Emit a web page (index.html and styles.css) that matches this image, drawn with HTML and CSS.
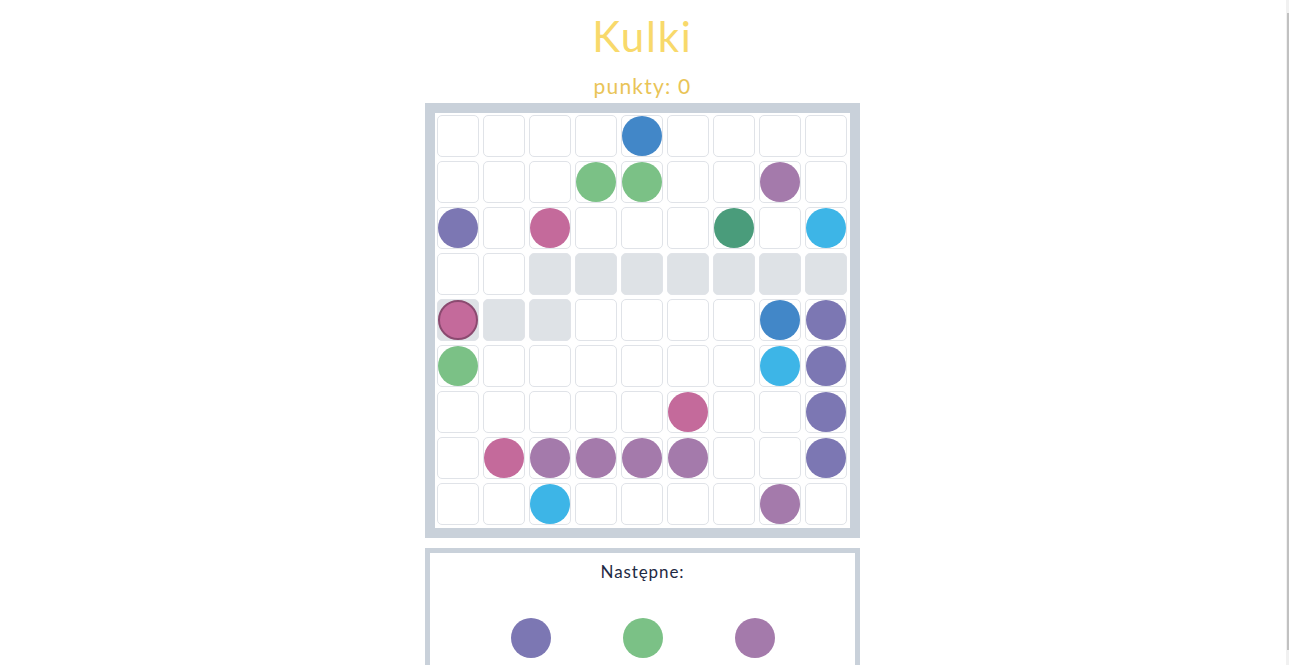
FILE: index.html
```html
<!DOCTYPE html>
<html lang="pl">
<head>
<meta charset="utf-8">
<title>Kulki</title>
<link rel="stylesheet" href="styles.css">
</head>
<body>
<main class="app">
  <h1 class="title">Kulki</h1>
  <div class="score">punkty: 0</div>
  <div class="board">
    <div class="cell"></div><div class="cell"></div><div class="cell"></div><div class="cell"></div><div class="cell"><span class="ball blue"></span></div><div class="cell"></div><div class="cell"></div><div class="cell"></div><div class="cell"></div>
    <div class="cell"></div><div class="cell"></div><div class="cell"></div><div class="cell"><span class="ball green"></span></div><div class="cell"><span class="ball green"></span></div><div class="cell"></div><div class="cell"></div><div class="cell"><span class="ball purple"></span></div><div class="cell"></div>
    <div class="cell"><span class="ball indigo"></span></div><div class="cell"></div><div class="cell"><span class="ball pink"></span></div><div class="cell"></div><div class="cell"></div><div class="cell"></div><div class="cell"><span class="ball teal"></span></div><div class="cell"></div><div class="cell"><span class="ball cyan"></span></div>
    <div class="cell"></div><div class="cell"></div><div class="cell path"></div><div class="cell path"></div><div class="cell path"></div><div class="cell path"></div><div class="cell path"></div><div class="cell path"></div><div class="cell path"></div>
    <div class="cell path"><span class="ball pink selected"></span></div><div class="cell path"></div><div class="cell path"></div><div class="cell"></div><div class="cell"></div><div class="cell"></div><div class="cell"></div><div class="cell"><span class="ball blue"></span></div><div class="cell"><span class="ball indigo"></span></div>
    <div class="cell"><span class="ball green"></span></div><div class="cell"></div><div class="cell"></div><div class="cell"></div><div class="cell"></div><div class="cell"></div><div class="cell"></div><div class="cell"><span class="ball cyan"></span></div><div class="cell"><span class="ball indigo"></span></div>
    <div class="cell"></div><div class="cell"></div><div class="cell"></div><div class="cell"></div><div class="cell"></div><div class="cell"><span class="ball pink"></span></div><div class="cell"></div><div class="cell"></div><div class="cell"><span class="ball indigo"></span></div>
    <div class="cell"></div><div class="cell"><span class="ball pink"></span></div><div class="cell"><span class="ball purple"></span></div><div class="cell"><span class="ball purple"></span></div><div class="cell"><span class="ball purple"></span></div><div class="cell"><span class="ball purple"></span></div><div class="cell"></div><div class="cell"></div><div class="cell"><span class="ball indigo"></span></div>
    <div class="cell"></div><div class="cell"></div><div class="cell"><span class="ball cyan"></span></div><div class="cell"></div><div class="cell"></div><div class="cell"></div><div class="cell"></div><div class="cell"><span class="ball purple"></span></div><div class="cell"></div>
  </div>
  <section class="next">
    <div class="next-label">Następne:</div>
    <div class="next-balls">
      <span class="ball indigo"></span>
      <span class="ball green"></span>
      <span class="ball purple"></span>
    </div>
  </section>
</main>
<div class="scrollbar"><div class="scrollbar-thumb"></div></div>
</body>
</html>
```

FILE: styles.css
```css
html {
  background: #ffffff;
}
body {
  margin: 0;
  padding-right: 4px;
  font-family: Lato, "Open Sans", sans-serif;
  min-height: 720px;
}
.app {
  width: 435px;
  margin: 0 auto;
  display: flex;
  flex-direction: column;
  align-items: center;
}
.title {
  margin: 12px 0 0;
  font-size: 42px;
  line-height: 48px;
  font-weight: 400;
  color: #f8d96b;
  letter-spacing: 1.8px;
}
.score {
  margin-top: 14px;
  font-size: 21px;
  line-height: 24px;
  color: #e9c457;
  letter-spacing: 1.2px;
}
.board {
  margin-top: 5px;
  box-sizing: border-box;
  width: 435px;
  border: 10px solid #c9d1da;
  padding: 2px 3px 3px 2px;
  display: grid;
  grid-template-columns: repeat(9, 42px);
  grid-auto-rows: 42px;
  gap: 4px;
  background: #fff;
}
.cell {
  box-sizing: border-box;
  border: 1px solid #e0e3e8;
  border-radius: 5px;
  background: #fff;
  display: flex;
}
.cell.path {
  background: #dee2e6;
}
.ball {
  display: block;
  box-sizing: border-box;
  width: 40px;
  height: 40px;
  border-radius: 50%;
}
.ball.selected {
  border: 2px solid #8b4a70;
}
.blue { background: #4287c8; }
.green { background: #7bc186; }
.purple { background: #a47aab; }
.indigo { background: #7c77b3; }
.pink { background: #c46a9b; }
.teal { background: #4a9c7b; }
.cyan { background: #3db5e7; }
.next {
  margin-top: 10px;
  box-sizing: border-box;
  width: 435px;
  height: 130px;
  border: 5px solid #c9d1da;
  display: flex;
  flex-direction: column;
  align-items: center;
}
.next-label {
  margin-top: 9px;
  font-size: 17px;
  line-height: 20px;
  color: #1f2a44;
  letter-spacing: 0.9px;
}
.next-balls {
  margin-top: 36px;
  display: flex;
  gap: 72px;
}
.scrollbar {
  position: fixed;
  top: 0;
  right: 0;
  width: 3px;
  height: 100%;
  background: #f1f1f1;
}
.scrollbar-thumb {
  position: absolute;
  top: 13px;
  bottom: 15px;
  right: 0;
  width: 2px;
  background: #c1c1c1;
}
```
